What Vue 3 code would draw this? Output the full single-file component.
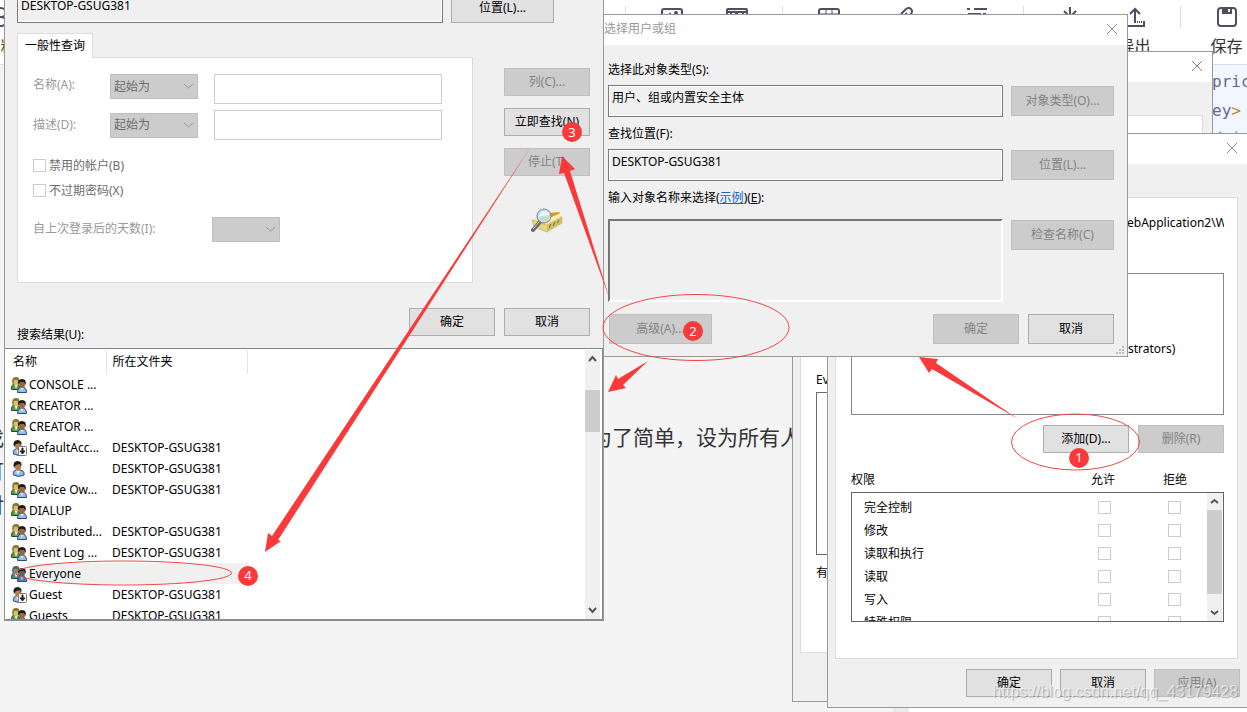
<script setup>
const tools = [
  [
    { icon: 'image', label: '' },
    { icon: 'video', label: '' },
  ],
  [
    { icon: 'table', label: '', wide: true },
    { icon: 'link', label: '', wide: true },
    { icon: 'outline', label: '', wide: true },
  ],
  [
    { icon: 'import', label: '' },
    { icon: 'export', label: '导出' },
  ],
  [{ icon: 'save', label: '保存' }],
]

const results = [
  { name: 'CONSOLE ...', folder: '', kind: 'group' },
  { name: 'CREATOR ...', folder: '', kind: 'group' },
  { name: 'CREATOR ...', folder: '', kind: 'group' },
  { name: 'DefaultAcc...', folder: 'DESKTOP-GSUG381', kind: 'disabled' },
  { name: 'DELL', folder: 'DESKTOP-GSUG381', kind: 'user' },
  { name: 'Device Ow...', folder: 'DESKTOP-GSUG381', kind: 'group' },
  { name: 'DIALUP', folder: '', kind: 'group' },
  { name: 'Distributed...', folder: 'DESKTOP-GSUG381', kind: 'group' },
  { name: 'Event Log ...', folder: 'DESKTOP-GSUG381', kind: 'group' },
  { name: 'Everyone', folder: '', kind: 'group', selected: true },
  { name: 'Guest', folder: 'DESKTOP-GSUG381', kind: 'disabled' },
  { name: 'Guests', folder: 'DESKTOP-GSUG381', kind: 'group' },
]

const permissions = ['完全控制', '修改', '读取和执行', '读取', '写入', '特殊权限']
</script>

<template>
  <div class="desktop">
    <!-- editor page behind the dialogs -->
    <header class="toolbar">
      <button class="tool bold-tool">
        <svg width="22" height="22" viewBox="0 0 22 22" fill="none" stroke="#4f4f63" stroke-width="2">
          <path d="M3 2H11A4.500 4.500 0 0 1 11 11H3ZM3 11H11A4.500 4.500 0 0 1 11 20H3Z" />
        </svg>
        <span>加粗</span>
      </button>
      <div class="tool-groups">
        <div v-for="(group, g) in tools" :key="g" class="tool-group" :class="{ flush: group[0].wide }">
          <button v-for="t in group" :key="t.icon" class="tool" :class="{ wide: t.wide }" :aria-label="t.icon">
            <svg width="22" height="22" viewBox="0 0 22 22" fill="none" stroke="#4f4f63" stroke-width="2">
              <g v-if="t.icon === 'image'">
                <rect x="1" y="3" width="20" height="17" rx="2" />
                <path d="M4 15L9 8L13 13L18 11" /><circle cx="15" cy="7" r="1" />
              </g>
              <g v-else-if="t.icon === 'video'">
                <rect x="1" y="3" width="20" height="17" rx="1" />
                <path d="M1 6H21M5 6V20M17 6V20M10 7L14 11L10 14Z" />
              </g>
              <g v-else-if="t.icon === 'table'">
                <rect x="1" y="3" width="20" height="17" rx="2" />
                <path d="M1 8H21M8 3V20M14 3V20" stroke-width="1" />
              </g>
              <path v-else-if="t.icon === 'link'" d="M7 15L15 7M9 8L14 3Q17 1 19 3T19 8L15 12M12 14L8 18Q5 20 3 18T3 13L7 9" />
              <path v-else-if="t.icon === 'outline'" d="M1 3H4M8 3H21M2 8H15M17 8H20M1 14H4M8 14H21" />
              <path v-else-if="t.icon === 'import'" d="M11 1V11M5 5L11 11L17 5M2 15V20H20V15" />
              <g v-else-if="t.icon === 'export'">
                <path d="M11 17V3M6 8L11 3L16 8M2 15V20H20V15" />
                <path d="M13 16H19" stroke-dasharray="1 1" />
              </g>
              <g v-else>
                <rect x="2" y="2" width="18" height="18" rx="3" />
                <path d="M6 2H16V8H6Z" fill="#4f4f63" stroke="none" />
                <path d="M13 3V6" stroke="#fff" />
              </g>
            </svg>
            <span v-if="t.label">{{ t.label }}</span>
          </button>
        </div>
      </div>
    </header>
    <main class="editor">
      <div class="source">
        <p><span class="cut">找</span><span class="tail">为了简单，设为所有人</span></p>
        <p><span class="cut">可</span></p>
        <p><span class="cut">对</span></p>
      </div>
      <div class="gutter"></div>
      <div class="preview">
        <pre><span>pric</span>
<span>ey<b>&gt;</b></span>
<i>含方式</i></pre>
      </div>
    </main>

    <!-- folder properties -->
    <section class="window props">
      <div class="title"><button class="close" aria-label="关闭"><svg width="10" height="10"><path d="M0 0L10 10M10 0L0 10" /></svg></button></div>
      <div class="page props-page">
        <p>Ev</p>
        <div class="props-box"></div>
        <p>有</p>
      </div>
    </section>

    <!-- security permissions -->
    <section class="window perms">
      <div class="title"><button class="close" aria-label="关闭"><svg width="10" height="10"><path d="M0 0L10 10M10 0L0 10" /></svg></button></div>
      <div class="page perms-page">
        <p class="path">ebApplication2\W</p>
        <div class="groups"><p>strators)</p></div>
        <div class="buttons">
          <button class="btn">添加(D)...</button>
          <button class="btn" disabled>删除(R)</button>
        </div>
        <div class="perm-head"><span>权限</span><span>允许</span><span>拒绝</span></div>
        <div class="perm-list">
          <table>
            <tbody>
              <tr v-for="p in permissions" :key="p">
                <th scope="row">{{ p }}</th>
                <td><input type="checkbox" disabled :aria-label="p + ' 允许'"></td>
                <td><input type="checkbox" disabled :aria-label="p + ' 拒绝'"></td>
              </tr>
            </tbody>
          </table>
          <div class="scroll perm-scroll">
            <svg width="15" height="17"><path d="M4 10L7.500 7L11 10" /></svg>
            <div class="thumb"></div>
            <svg width="15" height="17"><path d="M4 7L7.500 10L11 7" /></svg>
          </div>
        </div>
      </div>
      <div class="buttons footer">
        <button class="btn">确定</button>
        <button class="btn">取消</button>
        <button class="btn" disabled>应用(A)</button>
      </div>
    </section>

    <!-- select user or group -->
    <section class="window picker">
      <div class="title"><span>选择用户或组</span><button class="close" aria-label="关闭"><svg width="10" height="10"><path d="M0 0L10 10M10 0L0 10" /></svg></button></div>
      <div class="picker-body">
        <label for="otype">选择此对象类型(S):</label>
        <div class="line">
          <input id="otype" class="field" readonly value="用户、组或内置安全主体">
          <button class="btn tall" disabled>对象类型(O)...</button>
        </div>
        <label for="place">查找位置(F):</label>
        <div class="line">
          <input id="place" class="field" readonly value="DESKTOP-GSUG381">
          <button class="btn tall" disabled>位置(L)...</button>
        </div>
        <label for="names">输入对象名称来选择(<a href="#">示例</a>)(<u>E</u>):</label>
        <div class="line names">
          <textarea id="names" disabled></textarea>
          <button class="btn tall" disabled>检查名称(C)</button>
        </div>
        <div class="buttons picker-foot">
          <button class="btn tall advanced" disabled>高级(A)...</button>
          <button class="btn tall" disabled>确定</button>
          <button class="btn tall">取消</button>
        </div>
      </div>
      <svg class="grip" width="8" height="8" fill="#bdbdbd">
        <path d="M6 0h2v2h-2zM3 3h2v2h-2zM6 3h2v2h-2zM0 6h2v2h-2zM3 6h2v2h-2zM6 6h2v2h-2z" />
      </svg>
    </section>

    <!-- advanced search -->
    <section class="window finder">
      <div class="line top-line">
        <input class="field" readonly value="DESKTOP-GSUG381" aria-label="查找位置">
        <button class="btn tall">位置(L)...</button>
      </div>
      <div class="finder-main">
        <div class="tabs">
          <button class="tab">一般性查询</button>
          <div class="page query">
            <div class="query-row first">
              <label for="qname">名称(A):</label>
              <div class="select">
                <select aria-label="名称条件" disabled><option>起始为</option></select>
                <svg width="9" height="5"><path d="M0 0L4.500 4L9 0" /></svg>
              </div>
              <input id="qname" class="query-input" disabled>
            </div>
            <div class="query-row">
              <label for="qdesc">描述(D):</label>
              <div class="select">
                <select aria-label="描述条件" disabled><option>起始为</option></select>
                <svg width="9" height="5"><path d="M0 0L4.500 4L9 0" /></svg>
              </div>
              <input id="qdesc" class="query-input" disabled>
            </div>
            <div class="checks">
              <label><input type="checkbox" disabled>禁用的帐户(B)</label>
              <label><input type="checkbox" disabled>不过期密码(X)</label>
            </div>
            <div class="query-row days">
              <label for="qdays">自上次登录后的天数(I):</label>
              <div class="select">
                <select id="qdays" disabled></select>
                <svg width="9" height="5"><path d="M0 0L4.500 4L9 0" /></svg>
              </div>
            </div>
          </div>
        </div>
        <div class="side">
          <button class="btn" disabled>列(C)...</button>
          <button class="btn">立即查找(N)</button>
          <button class="btn" disabled>停止(T)</button>
          <svg class="drawer" width="32" height="26" viewBox="0 0 32 26">
            <path d="M1 12L10 7L31 8V15L16 24L3 19Z" fill="#f3e79b" />
            <path d="M1 12L16 17L31 9V15L16 24L3 19Z" fill="#e2d67f" stroke="#b5a552" stroke-width="0.500" />
            <path d="M16 17L31 9V15L16 24Z" fill="#cfc06a" />
            <path d="M18 20L20 16M22 18L24 14M26 15L28 12" stroke="#6d6740" />
            <path d="M17 5L29 4L27 8L19 10Z" fill="#d69b14" />
            <path d="M19 11L28 7" stroke="#fff5bd" stroke-width="2" />
            <path d="M2 22L9 14" stroke="#696d75" stroke-width="4" stroke-linecap="round" />
            <path d="M2 21L8 14" stroke="#bfc3c9" stroke-width="1" />
            <circle cx="13" cy="8" r="7" fill="#c4ddf0" stroke="#7e8893" stroke-width="1" />
            <path d="M8 9Q9 3 14 3Q18 4 18 7Q13 7 8 9Z" fill="#eef8ff" />
            <path d="M8 11Q13 9 18 9Q16 14 12 13Z" fill="#d4dca6" />
          </svg>
        </div>
      </div>
      <div class="confirm">
        <span id="results-label">搜索结果(U):</span>
        <div class="buttons">
          <button class="btn">确定</button>
          <button class="btn">取消</button>
        </div>
      </div>
      <div class="results">
        <table aria-labelledby="results-label">
          <thead><tr><th>名称</th><th>所在文件夹</th><th></th></tr></thead>
          <tbody>
            <tr v-for="(r, i) in results" :key="i" :class="{ selected: r.selected }">
              <td>
                <div class="who">
                  <svg width="16" height="16" viewBox="0 0 16 16">
                    <g v-if="r.kind === 'group'">
                      <path d="M0.500 12.500Q0 7 4 7Q9 7 9 12.500Z" :fill="r.selected ? '#4d8a82' : '#5a9c42'" stroke="#2b4a26" />
                      <path d="M3.500 7L5 12L7 7Z" fill="#eef3dd" />
                      <ellipse cx="5" cy="4" rx="3" ry="4" :fill="r.selected ? '#7b9080' : '#dcb873'" />
                      <path d="M1.500 7Q0 0 5 0Q9 0 8 4Q5 2 3 3L2.500 7Z" :fill="r.selected ? '#4c6a50' : '#857a2a'" />
                      <path d="M6.500 15.500Q6.500 10 11 10Q15.500 10 15.500 15.500Z" :fill="r.selected ? '#4a82c4' : '#93bdec'" stroke="#2d4a70" />
                      <path d="M9.500 10L11 14L12.500 10Z" fill="#f2f6fb" />
                      <ellipse cx="11" cy="7" rx="3" ry="4" :fill="r.selected ? '#5d626c' : '#9c6740'" />
                      <path d="M7.500 8Q5.500 2 11 2Q16 2 14.500 8L13 5L9 5Z" fill="#1f1b17" />
                    </g>
                    <g v-else>
                      <path d="M2.500 14Q1 9 7 9Q14 9 13 14Q8 17 2.500 14Z" fill="#93bdec" stroke="#2d4a70" />
                      <path d="M5 9L7 14L9 9Z" fill="#f5f7fa" />
                      <ellipse cx="7" cy="5.500" rx="3" ry="4.500" fill="#b57d50" />
                      <path d="M3 7Q1 0 7 0Q12 1 10 6L9 3L5 4Z" fill="#1f1b17" />
                      <template v-if="r.kind === 'disabled'">
                        <rect x="7.500" y="6.500" width="8" height="9" rx="1" fill="#fff" stroke="#777" />
                        <path d="M11 8H12V11H14L11.500 14L9 11H11Z" fill="#222" stroke="#222" />
                      </template>
                    </g>
                  </svg>
                  <span>{{ r.name }}</span>
                </div>
              </td>
              <td>{{ r.folder }}</td>
              <td></td>
            </tr>
          </tbody>
        </table>
        <div class="scroll result-scroll">
          <svg width="15" height="18"><path d="M4 11L7.500 7L11 11" /></svg>
          <div class="thumb"></div>
          <svg width="15" height="18"><path d="M4 7L7.500 11L11 7" /></svg>
        </div>
      </div>
    </section>

    <!-- step-by-step annotations -->
    <svg class="marks" width="1247" height="712" viewBox="0 0 1247 712">
      <g fill="none" stroke="#f04848">
        <ellipse cx="1075.500" cy="442" rx="64" ry="28" />
        <ellipse cx="696" cy="327.500" rx="93" ry="33" />
        <ellipse cx="123.500" cy="573" rx="108" ry="12" />
      </g>
      <g fill="#fa3a3a">
        <path d="M919 357L938 359L936 363L1018 419L932 369L929 373Z" />
        <path d="M608 392L616 375L618 379L648 361L623 385L626 388Z" />
        <path d="M562 156L575 169L570 171L610 300L564 173L559 174Z" />
        <path d="M265 552L268 533L272 536L532 145L278 540L281 541Z" />
        <circle cx="1079" cy="458" r="10" />
        <circle cx="693" cy="331" r="10" />
        <circle cx="572" cy="132" r="10" />
        <circle cx="248" cy="576" r="10" />
      </g>
      <g fill="#fff" font-size="13" text-anchor="middle">
        <text x="1079" y="462">1</text>
        <text x="693" y="336">2</text>
        <text x="572" y="137">3</text>
        <text x="248" y="580">4</text>
      </g>
    </svg>
    <div class="watermark">https://blog.csdn.net/qq_43179428</div>
  </div>
</template>

<style>
body {
  overflow: hidden;
}
</style>

<style scoped>
* {
  box-sizing: border-box;
}

.desktop {
  position: relative;
  display: flex;
  flex-direction: column;
  min-height: 100vh;
  overflow: hidden;
  background: #f4f4f4;
  color: #000;
  font: 12px/18px "Noto Sans", "Noto Sans CJK SC", sans-serif;
}

p {
  margin: 0;
}

button,
input,
select,
textarea {
  font: inherit;
  color: inherit;
  margin: 0;
}

/* editor page */
.toolbar {
  display: flex;
  height: 65px;
  background: #fff;
  border-bottom: 1px solid #dcdfe6;
}

.tool {
  display: flex;
  flex: none;
  flex-direction: column;
  align-items: center;
  gap: 8px;
  width: 65px;
  padding: 6px 0 0;
  border: 0;
  background: none;
  color: #333;
  font-size: 16px;
  line-height: 20px;
}

.tool.wide {
  width: 74px;
}

.bold-tool {
  margin-left: -32px;
}

.tool-groups {
  display: flex;
  margin-left: 592px;
}

.tool-group {
  display: flex;
  padding: 0 13px 0 14px;
  background: linear-gradient(#ddd, #ddd) 0 6px / 1px 22px no-repeat;
}

.tool-group.flush {
  padding: 0 9px 0 10px;
}

.editor {
  display: flex;
  flex: 1;
}

.source {
  flex: none;
  width: 893px;
  padding-top: 355px;
  color: #333;
  font-size: 21px;
  line-height: 34px;
}

.source p {
  display: flex;
}

.cut {
  width: 21px;
  margin-left: -17px;
}

.tail {
  margin-left: 587px;
}

.gutter {
  flex: none;
  width: 16px;
  background: #ebebeb;
}

.preview {
  flex: 1;
  min-width: 0;
  background: #fff;
}

pre {
  height: 400px;
  margin: 0;
  padding: 2px 0 0 303px;
  overflow: hidden;
  background: #f2f7ff;
  color: #5f6896;
  font: 16px/29px "DejaVu Sans Mono", "Noto Sans CJK SC", monospace;
}

pre b {
  color: #b5952f;
  font-weight: 400;
}

pre i {
  color: #8a8fa8;
  font-style: normal;
}

/* dialog parts */
.window {
  position: absolute;
  border: 1px solid #999;
  background: #f0f0f0;
}

.title {
  display: flex;
  justify-content: space-between;
  align-items: center;
  height: 30px;
  padding: 0 10px 2px 0;
  background: #fff;
  color: #999;
}

.close {
  display: flex;
  margin-left: auto;
  padding: 0;
  border: 0;
  background: none;
}

.close svg {
  stroke: #888;
}

.page {
  border: 1px solid #dcdcdc;
  background: #fff;
}

.btn {
  width: 86px;
  height: 28px;
  padding: 0;
  border: 1px solid #adadad;
  background: #e1e1e1;
  white-space: nowrap;
}

.btn:disabled {
  border-color: #bfbfbf;
  background: #ccc;
  color: #838383;
}

.btn.tall {
  height: 30px;
}

.buttons {
  display: flex;
  justify-content: flex-end;
  gap: 9px;
}

.line {
  display: flex;
  align-items: center;
  gap: 8px;
}

.line > .btn {
  width: 103px;
}

.field {
  flex: 1;
  min-width: 0;
  height: 32px;
  padding: 0 3px 8px;
  border: 1px solid #7a7a7a;
  box-shadow: inset 0 0 0 1px #fff;
  background: #f0f0f0;
}

input[type="checkbox"] {
  appearance: none;
  flex: none;
  width: 13px;
  height: 13px;
  border: 1px solid #ccc;
  background: #fff;
}

table {
  table-layout: fixed;
  border-collapse: collapse;
}

th,
td {
  padding: 0;
  font-weight: 400;
  text-align: left;
  white-space: nowrap;
}

.scroll {
  display: flex;
  flex: none;
  flex-direction: column;
  width: 15px;
  background: #f0f0f0;
}

.scroll svg {
  flex: none;
  fill: none;
  stroke: #555;
  stroke-width: 2;
}

.thumb {
  background: #cdcdcd;
}

.scroll svg:last-child {
  margin-top: auto;
}

/* folder properties */
.props {
  left: 792px;
  top: 51px;
  width: 421px;
  padding-bottom: 48px;
}

.props-page {
  margin: 33px 9px 0 7px;
  padding: 255px 15px 70px;
}

.props-box {
  height: 163px;
  margin: 3px 0 9px;
  border: 1px solid #6b6b6b;
}

/* security permissions */
.perms {
  left: 827px;
  top: 133px;
  width: 421px;
}

.perms-page {
  margin: 33px 9px 0 7px;
  padding: 16px 13px 36px 15px;
}

.path {
  margin-left: 276px;
  overflow: hidden;
  white-space: nowrap;
}

.groups {
  height: 142px;
  margin: 41px 0 10px;
  padding: 66px 0 0 276px;
  border: 1px solid #828790;
}

.perm-head {
  display: grid;
  grid-template-columns: 217px 70px 74px;
  margin: 18px 0 3px;
}

.perm-head span + span {
  text-align: center;
}

.perm-list {
  display: flex;
  height: 130px;
  overflow: hidden;
  border: 1px solid #646464;
}

.perm-list table {
  width: 355px;
  height: min-content;
  margin-top: 3px;
}

.perm-list tr {
  height: 23px;
}

.perm-list th {
  padding-left: 12px;
}

.perm-list td {
  width: 70px;
  text-align: center;
}

.perm-list td:last-child {
  width: 68px;
  padding-left: 2px;
}

.perm-list td input {
  display: block;
  margin: 0 auto;
}

.perm-scroll .thumb {
  height: 84px;
}

.footer {
  gap: 8px;
  padding: 10px 7px;
}

/* select user or group */
.picker {
  left: 603px;
  top: 14px;
  width: 525px;
}

.picker-body {
  display: flex;
  flex-direction: column;
  padding: 16px 13px 12px 4px;
}

.picker-body .line {
  margin: 6px 0 8px;
}

.picker-body .names {
  align-items: flex-end;
  margin: 12px 0;
}

.names .btn {
  margin-bottom: 52px;
}

.picker-body a {
  color: #0066cc;
}

textarea {
  flex: 1;
  height: 83px;
  resize: none;
  border: 2px solid;
  border-color: #777 #fff #fff #777;
  border-radius: 0;
  background: #f0f0f0;
}

.btn.advanced {
  width: 103px;
  margin: 0 auto 0 1px;
}

.grip {
  position: absolute;
  right: 3px;
  bottom: 2px;
}

/* advanced search */
.finder {
  left: 4px;
  top: -8px;
  width: 600px;
  border-bottom: 2px solid #8a8a92;
}

.top-line {
  margin: 0 49px 10px 12px;
}

.top-line .field {
  height: 30px;
  padding-bottom: 6px;
}

.finder-main {
  display: flex;
  justify-content: space-between;
  padding: 0 13px 0 12px;
}

.tabs {
  width: 456px;
}

.tab {
  position: relative;
  display: block;
  width: 76px;
  height: 25px;
  padding: 0;
  border: 1px solid #dcdcdc;
  border-bottom: 0;
  background: #fff;
}

.query {
  height: 226px;
  margin-top: -1px;
  padding: 16px 15px;
  color: #6d6d6d;
}

.query-row {
  display: flex;
  align-items: center;
  height: 30px;
  margin-bottom: 6px;
}

.query-row label {
  width: 77px;
  color: #999;
  line-height: 22px;
}

.query-row.first {
  align-items: flex-start;
}

.select {
  position: relative;
  width: 88px;
  height: 25px;
}

.select select {
  appearance: none;
  width: 100%;
  height: 100%;
  padding: 0 3px;
  border: 1px solid #bfbfbf;
  border-radius: 0;
  background: #ccc;
  opacity: 1;
}

.select svg {
  position: absolute;
  right: 5px;
  top: 10px;
  fill: none;
  stroke: #999;
}

.query-input {
  width: 228px;
  height: 30px;
  margin-left: 16px;
  border: 1px solid #ccc;
  background: #fff;
}

.checks {
  padding: 7px 0 11px;
}

.checks label {
  display: flex;
  align-items: center;
  gap: 3px;
  height: 25px;
}

.days label {
  width: 179px;
}

.days .select {
  width: 68px;
}

.side {
  display: flex;
  flex-direction: column;
  align-items: center;
  gap: 12px;
  padding-top: 35px;
}

.drawer {
  margin-top: 20px;
}

.confirm {
  display: flex;
  justify-content: space-between;
  height: 36px;
  margin: 25px 0 4px;
  padding: 0 13px 0 12px;
}

.confirm > span {
  align-self: flex-end;
}

.results {
  display: flex;
  justify-content: space-between;
  height: 271px;
  overflow: hidden;
  padding: 1px 2px 0 0;
  border-top: 1px solid #828790;
  border-right: 1px solid #828790;
  background: #fff;
}

.results table {
  width: 243px;
  height: min-content;
}

.results thead th {
  height: 24px;
  padding-left: 6px;
  border-right: 1px solid #e5e5e5;
}

.results thead th:first-child {
  width: 101px;
  padding-left: 8px;
}

.results thead th:last-child {
  width: 0;
  padding: 0;
  border: 0;
}

.results tbody td {
  height: 21px;
  padding-left: 6px;
}

.results tbody td:last-child {
  padding: 0;
}

.who {
  display: flex;
  align-items: center;
  gap: 2px;
}

.selected td {
  background: linear-gradient(#f0f0f0, #f0f0f0);
}

.selected td:first-child {
  background: linear-gradient(90deg, #fff 22px, #f0f0f0 22px);
}

.result-scroll .thumb {
  height: 42px;
  margin-top: 22px;
}

/* annotations */
.marks {
  position: absolute;
  left: 0;
  top: 0;
  pointer-events: none;
}

.watermark {
  position: absolute;
  right: 9px;
  bottom: 10px;
  color: rgba(255, 255, 255, 0.6);
  font: 16px/20px "Liberation Sans", sans-serif;
  text-shadow: 1px 1px 1px rgba(0, 0, 0, 0.25);
}
</style>
